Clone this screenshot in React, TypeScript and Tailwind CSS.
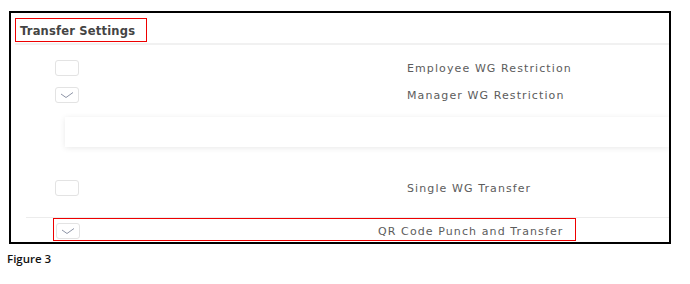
import React from 'react'

function Check({ checked }: { checked?: boolean }) {
  return (
    <div className="w-[24px] h-[16px] rounded-[3px] border border-[#e3e3e3] bg-white flex items-center justify-center shrink-0">
      {checked && (
        <svg width="14" height="8" viewBox="0 0 14 8">
          <polyline points="1,3 6,6.5 13,1.5" fill="none" stroke="#8d94a6" strokeWidth="1" />
        </svg>
      )}
    </div>
  )
}

const label = "text-[11px] tracking-[1.1px] text-[#5c5c5c] leading-none"

export default function App() {
  return (
    <div className="w-[690px] h-[284px] bg-white relative" style={{ fontFamily: '"DejaVu Sans", sans-serif' }}>
      <div className="pt-[11px] pl-[9px]">
        <div className="w-[662px] h-[233px] border-2 border-black overflow-hidden flex flex-col">
          <div className="h-[30px] pt-[5px] pl-[4px] shrink-0">
            <div className="w-[132px] h-[24px] border border-[#e00] flex items-center pl-[4px] pt-[3px]">
              <span className="text-[11.5px] font-bold text-[#444] leading-none tracking-[0.2px]">Transfer Settings</span>
            </div>
          </div>
          <div className="h-[2px] bg-[#f1f1f1] shrink-0 ml-[4px]" />

          <div className="flex items-center h-[16px] mt-[15px] ml-[44px]">
            <Check />
            <span className={label + ' ml-[328px]'}>Employee WG Restriction</span>
          </div>
          <div className="flex items-center h-[16px] mt-[11px] ml-[44px]">
            <Check checked />
            <span className={label + ' ml-[328px]'}>Manager WG Restriction</span>
          </div>

          <div className="h-[30px] mt-[14px] ml-[54px] bg-white shadow-[0_1px_6px_rgba(0,0,0,0.09)] shrink-0" />

          <div className="flex items-center h-[16px] mt-[33px] ml-[44px]">
            <Check />
            <span className={label + ' ml-[328px]'}>Single WG Transfer</span>
          </div>

          <div className="h-px bg-[#ececec] mt-[21px] ml-[15px] shrink-0" />

          <div className="ml-[42px] w-[523px] h-[23px] border border-[#e00] flex items-center pl-[2px] pt-[3px] shrink-0">
            <Check checked />
            <span className={label + ' ml-[298px]'}>QR Code Punch and Transfer</span>
          </div>
        </div>
      </div>
      <div className="pl-[7px] pt-[9px] text-[11.5px] font-semibold text-[#111] leading-none" style={{ fontFamily: '"Open Sans", sans-serif' }}>
        Figure 3
      </div>
    </div>
  )
}
